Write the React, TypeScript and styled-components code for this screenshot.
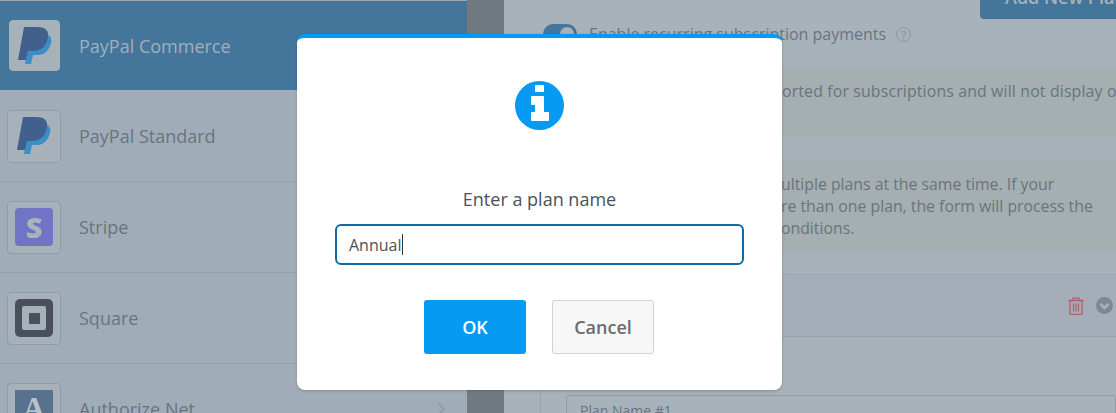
import React from 'react';
import styled, { createGlobalStyle } from 'styled-components';

const GlobalStyle = createGlobalStyle`
    html, body {
        margin: 0;
        padding: 0;
        overflow: hidden;
    }
    #root {
        width: 1116px;
        height: 413px;
    }
`;

const Page = styled.div`
    position: relative;
    display: flex;
    width: 1116px;
    height: 413px;
    overflow: hidden;
    font-family: 'Open Sans', sans-serif;
    background: #a7b1ba;
`;

const Sidebar = styled.div`
    width: 467px;
    flex-shrink: 0;
    background: #a0adb9;
`;

const Provider = styled.div<{ $active?: boolean }>`
    display: flex;
    align-items: center;
    height: 91px;
    padding: 0 22px 0 ${(p) => (p.$active ? '9px' : '7px')};
    gap: 18px;
    box-sizing: border-box;
    background: ${(p) => (p.$active ? '#44769b' : 'transparent')};
    border-top: ${(p) => (p.$active ? '1px solid #9aa5ae' : 'none')};
    border-bottom: 1px solid ${(p) => (p.$active ? '#a0adb9' : '#95a2ae')};
    color: ${(p) => (p.$active ? '#a2afba' : '#6a747e')};
    font-size: 18px;
`;

const LogoBox = styled.div<{ $active?: boolean }>`
    width: ${(p) => (p.$active ? '51px' : '54px')};
    height: ${(p) => (p.$active ? '51px' : '53px')};
    margin-right: ${(p) => (p.$active ? '1px' : '0')};
    flex-shrink: 0;
    display: flex;
    align-items: center;
    justify-content: center;
    box-sizing: border-box;
    border-radius: 4px;
    background: #a7b1ba;
    border: 1px solid ${(p) => (p.$active ? '#a7b1ba' : '#8f9caa')};
`;

const AuthorizeTile = styled.div`
    width: 38px;
    height: 38px;
    display: flex;
    align-items: center;
    justify-content: center;
    background: #56728c;
    color: #b9c1c9;
    font-family: 'Liberation Serif', serif;
    font-weight: 700;
    font-size: 31px;
    line-height: 38px;
`;

const StripeTile = styled.div`
    width: 38px;
    height: 38px;
    display: flex;
    align-items: center;
    justify-content: center;
    border-radius: 4px;
    background: #6f74c4;
    color: #a9b3bc;
    font-weight: 800;
    font-size: 29px;
    line-height: 38px;
`;

const RowChevron = styled.svg`
    margin-left: auto;
    flex-shrink: 0;
`;

const Gutter = styled.div`
    width: 37px;
    flex-shrink: 0;
    background: #727a81;
`;

const Content = styled.div`
    flex: 1;
    min-width: 0;
    position: relative;
    background: #a8b2bb;
    color: #6a747e;
    font-size: 16px;
`;

const AddButton = styled.div`
    position: absolute;
    top: -25px;
    left: 476px;
    width: 150px;
    height: 44px;
    padding-left: 25px;
    box-sizing: border-box;
    border-radius: 4px;
    background: #44769b;
    color: #a7b1ba;
    font-weight: 600;
    font-size: 18px;
    line-height: 44px;
    white-space: nowrap;
`;

const ToggleRow = styled.div`
    display: flex;
    align-items: center;
    height: 24px;
    margin: 22px 0 0 39px;
`;

const Toggle = styled.div`
    width: 34px;
    height: 20px;
    margin-right: 12px;
    border-radius: 10px;
    background: #44769b;
    flex-shrink: 0;
    display: flex;
    justify-content: flex-end;
    align-items: center;
    padding-right: 3px;
    box-sizing: border-box;
`;

const Knob = styled.div`
    width: 14px;
    height: 14px;
    border-radius: 50%;
    background: #a7b1ba;
`;

const HelpIcon = styled.span`
    margin-left: 10px;
    width: 13px;
    height: 13px;
    border: 1.5px solid #8d97a1;
    border-radius: 50%;
    color: #8d97a1;
    font-size: 11px;
    font-weight: 600;
    line-height: 13px;
    text-align: center;
`;

const Notice = styled.div<{ $tall?: boolean }>`
    margin: ${(p) => (p.$tall ? '24px 0 0 37px' : '23px 0 0 37px')};
    height: ${(p) => (p.$tall ? '91px' : '67px')};
    padding: ${(p) => (p.$tall ? '13px 0 0 240px' : '11px 0 0 241px')};
    box-sizing: border-box;
    background: #a5aeb0;
    font-size: 15.8px;
    letter-spacing: ${(p) => (p.$tall ? '0' : '0.17px')};
    line-height: 22px;
    white-space: nowrap;
    overflow: hidden;
`;

const PlanHeader = styled.div`
    margin: 23px 0 0 37px;
    height: 63px;
    box-sizing: border-box;
    display: flex;
    align-items: center;
    justify-content: flex-end;
    gap: 12px;
    padding-right: 3px;
    background: #a5aeb8;
    border-top: 1px solid #98a5b2;
    border-bottom: 1px solid #98a3ae;
`;

const PlanBody = styled.div`
    margin-left: 36px;
    height: 77px;
    padding: 58px 0 0 25px;
    box-sizing: border-box;
    border-left: 1px solid #98a3ae;
`;

const PlanInput = styled.div`
    height: 40px;
    padding: 5px 0 0 13px;
    box-sizing: border-box;
    border: 1px solid #929ca6;
    border-radius: 3px;
    color: #6a747e;
    font-size: 14px;
`;

const Overlay = styled.div`
    position: absolute;
    left: 297px;
    top: 34px;
    width: 485px;
    height: 356px;
    box-sizing: border-box;
    display: flex;
    flex-direction: column;
    align-items: center;
    background: #fff;
    border-top: 4px solid #069af3;
    border-radius: 8px;
    box-shadow: 0 1px 3px rgba(60, 70, 80, 0.35);
`;

const InfoIcon = styled.svg`
    width: 49px;
    height: 49px;
    margin-top: 43px;
`;

const Prompt = styled.div`
    margin-top: 57px;
    font-size: 18px;
    line-height: 24px;
    color: #4b5159;
`;

const NameInput = styled.div`
    margin-top: 13px;
    width: 409px;
    height: 41px;
    box-sizing: border-box;
    display: flex;
    align-items: center;
    padding-left: 12px;
    border: 2px solid #0f6ba8;
    border-radius: 6px;
    font-size: 16px;
    color: #4b5159;
`;

const Caret = styled.span`
    display: inline-block;
    width: 1px;
    height: 21px;
    margin-left: 1px;
    background: #333;
`;

const Actions = styled.div`
    display: flex;
    gap: 26px;
    margin: 35px 1px 0 0;
`;

const Button = styled.div<{ $primary?: boolean }>`
    height: 54px;
    width: 102px;
    box-sizing: border-box;
    display: flex;
    align-items: center;
    justify-content: center;
    border-radius: 3px;
    font-size: 18px;
    font-weight: 600;
    background: ${(p) => (p.$primary ? '#069af3' : '#f7f7f7')};
    color: ${(p) => (p.$primary ? '#fff' : '#6a6d70')};
    border: ${(p) => (p.$primary ? 'none' : '1px solid #d0d3d6')};
`;

// paypal double P mark
const PayPalLogo = () => (
    <svg width="34" height="38" viewBox="0 0 34 38">
        <path d="M12 11h15l4-3c2 2 3 5 2 8-2 8-7 12-13 12h-5l-2 9H7z" fill="#3a8fc4" />
        <path d="M6 0h13c8 0 12 3 11 10-1 9-7 14-15 14h-5l-2 9H0z" fill="#42608e" />
    </svg>
);

const SquareLogo = () => (
    <svg width="38" height="38" viewBox="0 0 38 38">
        <rect width="38" height="38" rx="5" fill="#4a505b" />
        <rect x="7" y="7" width="24" height="24" rx="2" fill="#a7b1ba" />
        <rect x="14" y="14" width="11" height="11" rx="1" fill="#4a505b" />
    </svg>
);

const TrashIcon = () => (
    <svg width="16" height="18" viewBox="0 0 16 18" fill="none" stroke="#b06069" strokeWidth="1.3">
        <path d="M0.500 3.500h15M5 3.500V1.200h6v2.300M2 3.500v13a1 1 0 0 0 1 1h10a1 1 0 0 0 1-1v-13M5.500 6.500v8M8 6.500v8M10.500 6.500v8" />
    </svg>
);

const ChevronCircle = () => (
    <svg width="17" height="17" viewBox="0 0 17 17">
        <circle cx="8.500" cy="8.500" r="8.500" fill="#7c8894" />
        <path d="M4.500 7l4 4 4-4" fill="none" stroke="#a7b1ba" strokeWidth="3" />
    </svg>
);

const App: React.FC = () => {
    return (
        <Page>
            <GlobalStyle />
            <Sidebar>
                <Provider $active>
                    <LogoBox $active><PayPalLogo /></LogoBox>
                    PayPal Commerce
                </Provider>
                <Provider>
                    <LogoBox><PayPalLogo /></LogoBox>
                    PayPal Standard
                </Provider>
                <Provider>
                    <LogoBox><StripeTile>S</StripeTile></LogoBox>
                    Stripe
                </Provider>
                <Provider>
                    <LogoBox><SquareLogo /></LogoBox>
                    Square
                </Provider>
                <Provider>
                    <LogoBox><AuthorizeTile>A</AuthorizeTile></LogoBox>
                    Authorize.Net
                    <RowChevron width="8" height="14" viewBox="0 0 8 14" fill="none" stroke="#8c98a4" strokeWidth="1.3">
                        <path d="M1 1l6 6-6 6" />
                    </RowChevron>
                </Provider>
            </Sidebar>
            <Gutter />
            <Content>
                <AddButton>Add New Plan</AddButton>
                <ToggleRow>
                    <Toggle><Knob /></Toggle>
                    Enable recurring subscription payments
                    <HelpIcon>?</HelpIcon>
                </ToggleRow>
                <Notice>
                    orted for subscriptions and will not display o
                </Notice>
                <Notice $tall>
                    ultiple plans at the same time. If your
                    <br />
                    re than one plan, the form will process the
                    <br />
                    onditions.
                </Notice>
                <PlanHeader>
                    <TrashIcon />
                    <ChevronCircle />
                </PlanHeader>
                <PlanBody>
                    <PlanInput>Plan Name #1</PlanInput>
                </PlanBody>
            </Content>
            <Overlay>
                <InfoIcon viewBox="0 0 49 49">
                    <circle cx="24.500" cy="24.500" r="24.500" fill="#069af3" />
                    <path d="M20.500 4.500h8v6h-8zM16.500 15.500h12v16h5v8h-17v-8h4v-8h-4z" fill="#fff" stroke="#fff" strokeLinejoin="round" />
                </InfoIcon>
                <Prompt>Enter a plan name</Prompt>
                <NameInput>Annual<Caret /></NameInput>
                <Actions>
                    <Button $primary>OK</Button>
                    <Button>Cancel</Button>
                </Actions>
            </Overlay>
        </Page>
    );
};

export default App;
